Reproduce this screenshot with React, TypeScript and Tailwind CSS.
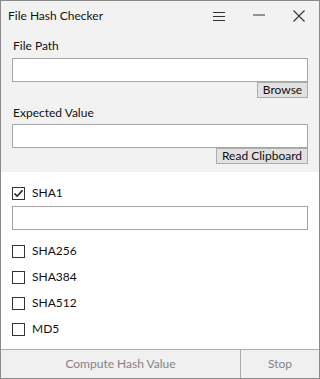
import React, { useState } from 'react';

const font = { fontFamily: '"Segoe UI", Lato, "Noto Sans", sans-serif' };

const HashOption: React.FC<{ label: string; checked: boolean; onToggle: () => void }> = ({ label, checked, onToggle }) => (
  <label className="flex items-center h-[16px] gap-[7px] cursor-default select-none" onClick={onToggle}>
    <span className="w-[13px] h-[13px] border border-[#333] bg-white flex items-center justify-center">
      {checked && (
        <svg width="11" height="11" viewBox="0 0 11 11">
          <path d="M1.5 5.5 L4.2 8.2 L9.5 2.2" fill="none" stroke="#1a1a1a" strokeWidth="1.6" />
        </svg>
      )}
    </span>
    <span className="text-[12px] text-[#111] leading-[16px]">{label}</span>
  </label>
);

export default function App() {
  const [selected, setSelected] = useState<{ [key: string]: boolean }>({ SHA1: true });
  const toggle = (k: string) => setSelected({ ...selected, [k]: !selected[k] });

  return (
    <div className="w-[320px] h-[379px] border border-[#8a8a8a] bg-white flex flex-col overflow-hidden" style={font}>
      {/* title bar + inputs */}
      <div className="bg-[#f2f2f2] flex flex-col">
        <div className="h-[29px] flex items-center pl-[7px] pr-[14px]">
          <span className="text-[12px] text-[#111] flex-1 mt-[1px]">File Hash Checker</span>
          <svg width="13" height="10" viewBox="0 0 13 10" className="mr-[27px] mt-[1px]">
            <path d="M0 1.5 H12 M0 5.5 H12 M0 9.5 H12" stroke="#333" strokeWidth="1" />
          </svg>
          <svg width="13" height="2" viewBox="0 0 13 2" className="mr-[27px] mt-[-1px]">
            <path d="M0 1 H12" stroke="#333" strokeWidth="1" />
          </svg>
          <svg width="12" height="12" viewBox="0 0 12 12" className="mt-[1px]">
            <path d="M0.5 0.5 L11.5 11.5 M11.5 0.5 L0.5 11.5" stroke="#333" strokeWidth="1.1" />
          </svg>
        </div>

        <div className="px-[11px] pt-[8px] pb-[8px] flex flex-col">
          <span className="text-[12px] text-[#111] leading-[16px] pl-[1px]">File Path</span>
          <input className="mt-[4px] h-[24px] border border-[#a6a6a6] bg-white outline-none px-1 text-[12px]" />
          <div className="flex justify-end">
            <button className="w-[51px] h-[16px] border border-[#adadad] bg-[#e1e1e1] text-[12px] leading-[14px] text-[#111]">
              Browse
            </button>
          </div>

          <span className="mt-[7px] text-[12px] text-[#111] leading-[16px] pl-[1px]">Expected Value</span>
          <input className="mt-[3px] h-[24px] border border-[#a6a6a6] bg-white outline-none px-1 text-[12px]" />
          <div className="flex justify-end">
            <button className="w-[92px] h-[16px] border border-[#adadad] bg-[#e1e1e1] text-[12px] leading-[14px] text-[#111]">
              Read Clipboard
            </button>
          </div>
        </div>
      </div>

      {/* hash options */}
      <div className="flex-1 px-[11px] pt-[13px] flex flex-col">
        <HashOption label="SHA1" checked={!!selected.SHA1} onToggle={() => toggle('SHA1')} />
        <input className="mt-[5px] h-[24px] border border-[#a6a6a6] bg-white outline-none px-1 text-[12px]" />
        <div className="mt-[13px] flex flex-col gap-[10px]">
          {['SHA256', 'SHA384', 'SHA512', 'MD5'].map((k) => (
            <HashOption key={k} label={k} checked={!!selected[k]} onToggle={() => toggle(k)} />
          ))}
        </div>
      </div>

      {/* bottom buttons */}
      <div className="h-[29px] border-t border-[#adadad] flex bg-[#f0f0f0]">
        <button className="w-[239px] text-[12px] text-[#838383]" disabled>
          Compute Hash Value
        </button>
        <button className="flex-1 border-l border-[#adadad] text-[12px] text-[#838383]">Stop</button>
      </div>
    </div>
  );
}
